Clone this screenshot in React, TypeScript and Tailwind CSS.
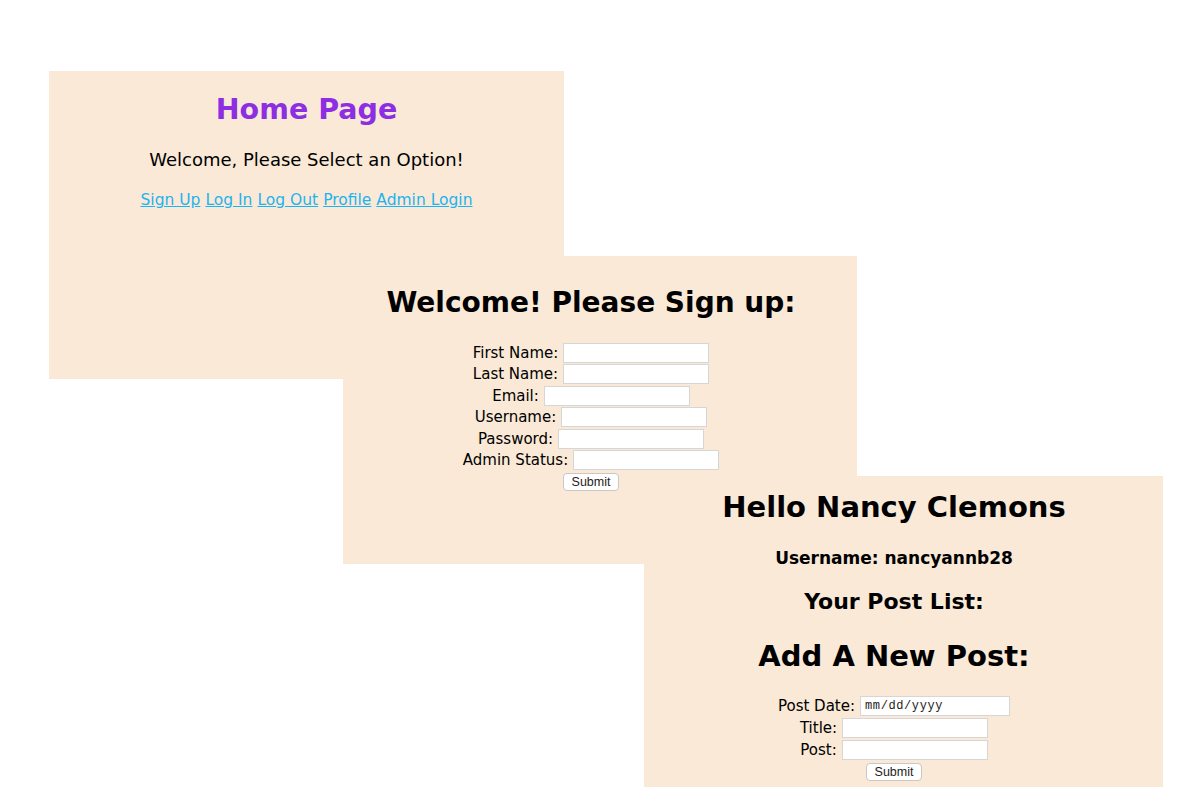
import React from "react";

const FONT = { fontFamily: '"DejaVu Sans", Verdana, sans-serif' };

function Field({ label, row = "h-[21.5px]" }: { label: string; row?: string }) {
  return (
    <div className={`flex ${row} items-center justify-center text-[15px] text-black`}>
      <span>{label}</span>
      <input className="ml-[5px] h-[20px] w-[146px] border border-[#d6d6d6] bg-white" />
    </div>
  );
}

function SubmitButton() {
  return (
    <div className="flex h-[22px] items-center justify-center">
      <button
        className="h-[18px] rounded-[4px] border border-[#c8c8c8] bg-white px-[8px] text-[12.5px] leading-none text-[#222]"
        style={{ fontFamily: '"Liberation Sans", Arial, sans-serif' }}
      >
        Submit
      </button>
    </div>
  );
}

function HomePanel() {
  return (
    <div className="absolute left-[49px] top-[71px] flex h-[308px] w-[515px] flex-col items-center bg-[#f9e9d6]">
      <h1 className="mt-[21px] text-[28.5px] font-bold leading-[36px] text-[#8e2ee2]">
        Home Page
      </h1>
      <p className="mt-[20px] text-[18px] leading-[24px] text-black">
        Welcome, Please Select an Option!
      </p>
      <div className="mt-[17px] flex gap-[5px] text-[15.5px] leading-[22px] text-[#1eb3f0]">
        {["Sign Up", "Log In", "Log Out", "Profile", "Admin Login"].map((l) => (
          <a key={l} href="#" className="underline">
            {l}
          </a>
        ))}
      </div>
    </div>
  );
}

function SignUpPanel() {
  return (
    <div className="absolute left-[343px] top-[256px] flex h-[308px] w-[514px] flex-col bg-[#f9e9d6] pr-[18px]">
      <h1 className="mt-[28px] text-center text-[28px] font-bold leading-[38px] text-black">
        Welcome! Please Sign up:
      </h1>
      <div className="mt-[20px] flex flex-col">
        <Field label="First Name:" />
        <Field label="Last Name:" />
        <Field label="Email:" />
        <Field label="Username:" />
        <Field label="Password:" />
        <Field label="Admin Status:" />
        <SubmitButton />
      </div>
    </div>
  );
}

function ProfilePanel() {
  return (
    <div className="absolute left-[644px] top-[476px] flex h-[311px] w-[519px] flex-col items-stretch bg-[#f9e9d6] pr-[19px] text-center text-black">
      <h1 className="mt-[12px] text-[29px] font-bold leading-[38px]">
        Hello Nancy Clemons
      </h1>
      <h3 className="mt-[20px] text-[17px] font-bold leading-[24px]">
        Username: nancyannb28
      </h3>
      <h2 className="mt-[18px] text-[22px] font-bold leading-[28px]">
        Your Post List:
      </h2>
      <h1 className="mt-[22px] text-[29px] font-bold leading-[36px]">
        Add A New Post:
      </h1>
      <div className="mt-[21px] flex flex-col">
        <div className="flex h-[22px] items-center justify-center text-[15px]">
          <span>Post Date:</span>
          <input
            placeholder="mm/dd/yyyy"
            className="ml-[5px] h-[20px] w-[150px] border border-[#d6d6d6] bg-white pl-[4px] text-[12px] tracking-[0.6px] placeholder:text-[#222]"
            style={{ fontFamily: '"Liberation Mono", "Courier New", monospace' }}
          />
        </div>
        <Field label="Title:" row="h-[22px]" />
        <Field label="Post:" row="h-[22px]" />
        <SubmitButton />
      </div>
    </div>
  );
}

export default function App() {
  return (
    <div className="relative h-[800px] w-[1200px] overflow-hidden bg-white" style={FONT}>
      <HomePanel />
      <SignUpPanel />
      <ProfilePanel />
    </div>
  );
}
